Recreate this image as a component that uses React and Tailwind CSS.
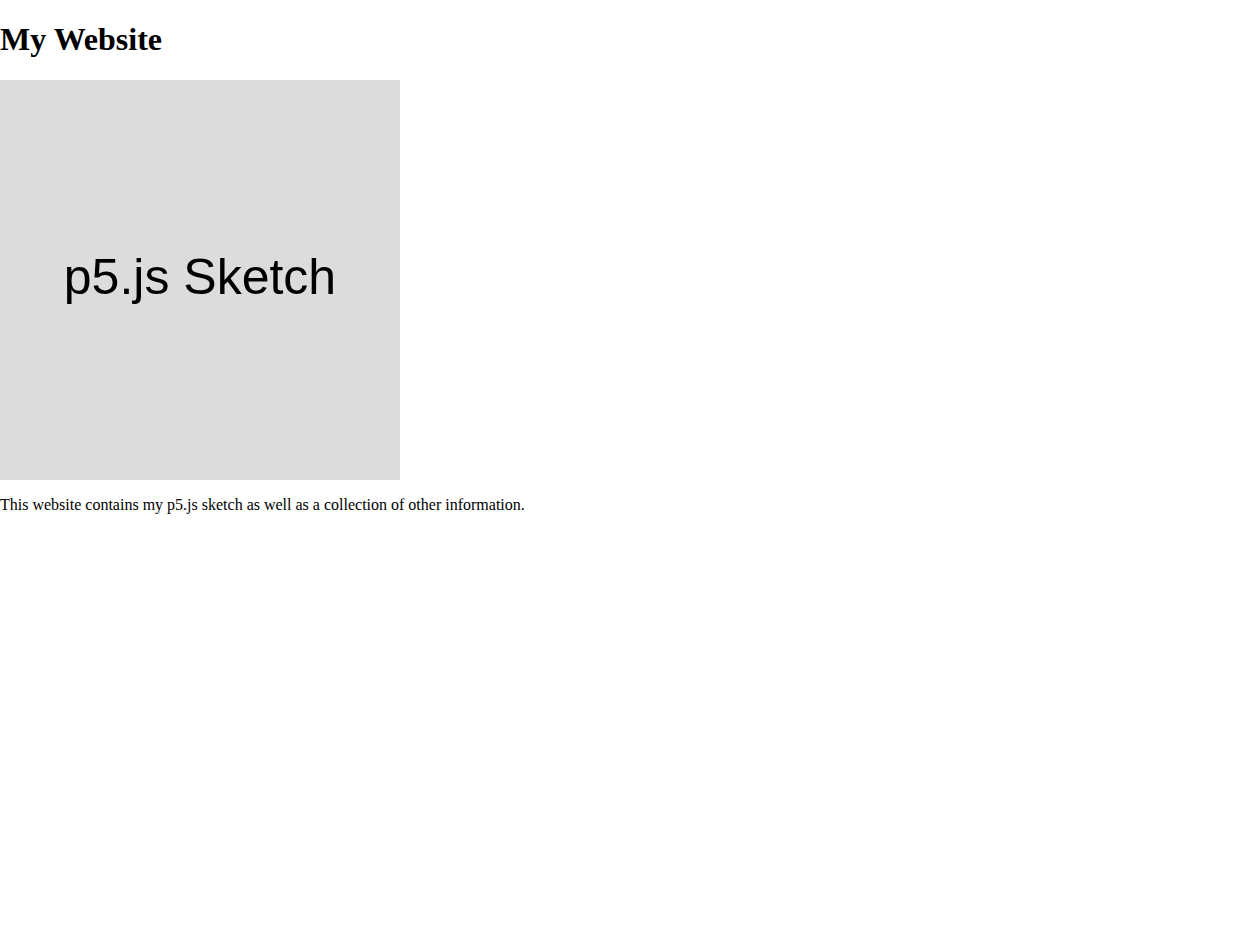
const App = () => {
  return (
    <div className="min-h-screen bg-white text-black font-['Liberation_Serif',serif]">
      <h1 className="text-[32px] leading-[37px] font-bold my-[21.44px]">My Website</h1>
      <div className="w-[400px] h-[400px] bg-[#dcdcdc] flex items-center justify-center pb-1">
        <span className="font-['Liberation_Sans',Arial,sans-serif] text-[50px] leading-[57px] text-black">p5.js Sketch</span>
      </div>
      <p className="text-base leading-[18px] my-4">
        This website contains my p5.js sketch as well as a collection of other information.
      </p>
    </div>
  )
}

export default App
